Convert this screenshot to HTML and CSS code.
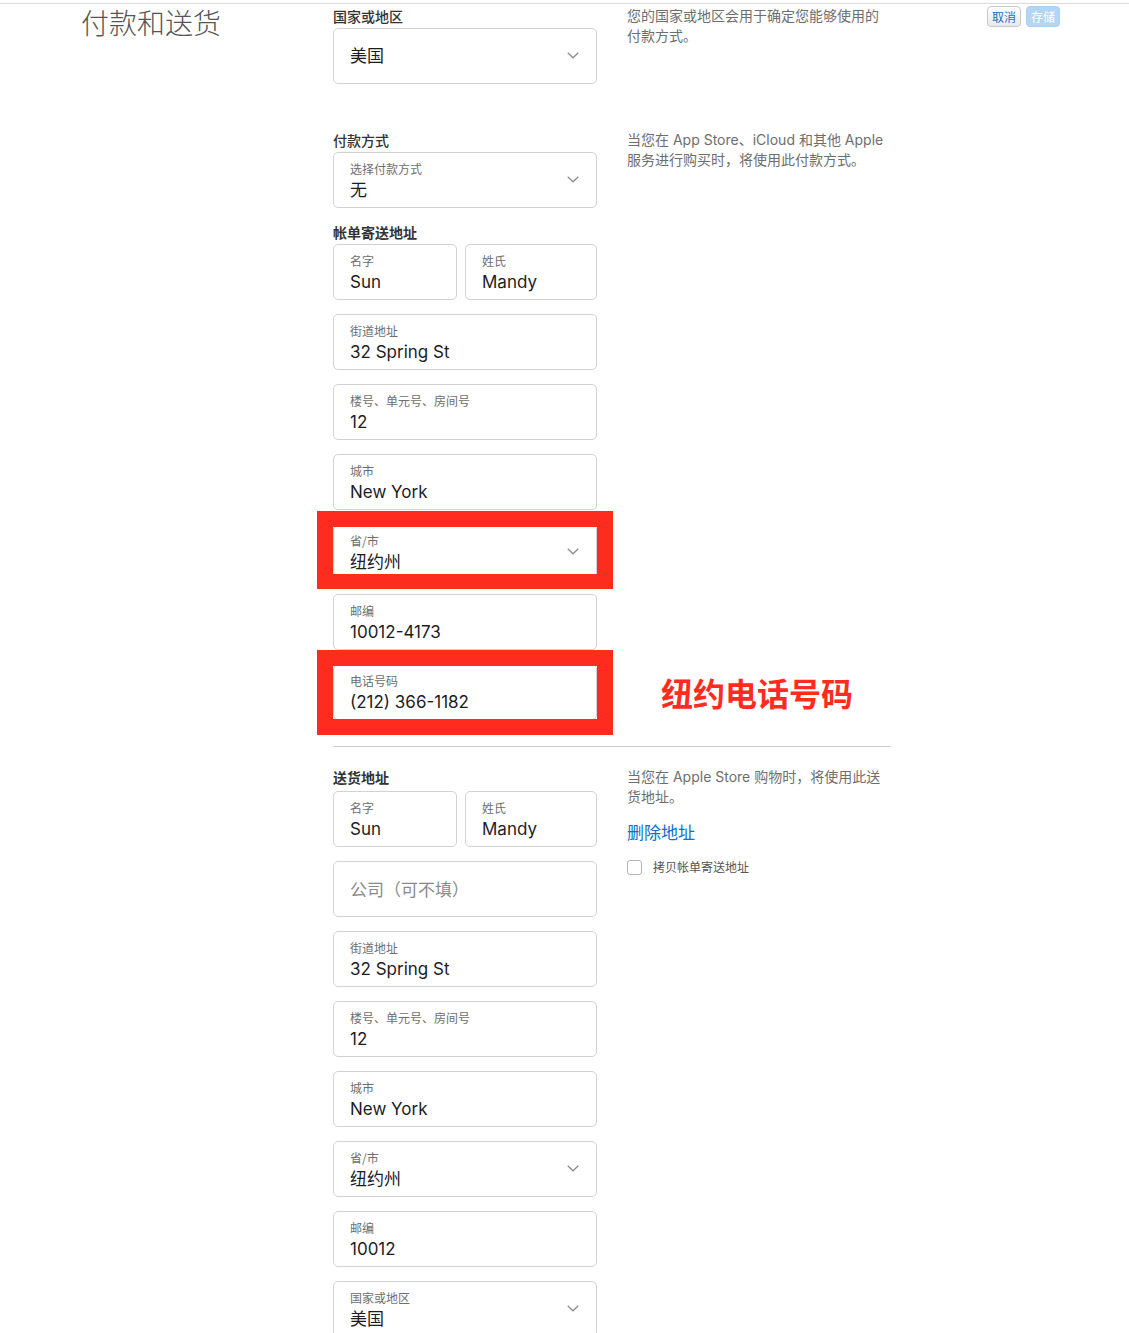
FILE: index.html
```html
<!DOCTYPE html>
<html lang="zh-CN">
<head>
<meta charset="utf-8">
<title>付款和送货</title>
<link rel="stylesheet" href="styles.css">
</head>
<body>
<div class="topline"></div>
<main class="page">
  <section class="row row-country">
    <h1 class="title">付款和送货</h1>
    <div class="form-col">
      <div class="group-label">国家或地区</div>
      <div class="field select single">
        <div class="value">美国</div>
        <svg class="chev" width="12" height="7" viewBox="0 0 12 7"><path d="M0.7 0.7L6 5.8L11.3 0.7" fill="none" stroke="#8a8a8a" stroke-width="1.2"/></svg>
      </div>
    </div>
    <div class="desc-col">
      <p class="desc">您的国家或地区会用于确定您能够使用的付款方式。</p>
    </div>
    <div class="actions">
      <button class="btn btn-cancel">取消</button>
      <button class="btn btn-save">存储</button>
    </div>
  </section>

  <section class="row row-payment">
    <div class="spacer"></div>
    <div class="form-col">
      <div class="group-label">付款方式</div>
      <div class="field select">
        <div class="label">选择付款方式</div>
        <div class="value">无</div>
        <svg class="chev" width="12" height="7" viewBox="0 0 12 7"><path d="M0.7 0.7L6 5.8L11.3 0.7" fill="none" stroke="#8a8a8a" stroke-width="1.2"/></svg>
      </div>

      <div class="group-label strong billing-label">帐单寄送地址</div>
      <div class="fields">
        <div class="name-row">
          <div class="field first"><div class="label">名字</div><div class="value">Sun</div></div>
          <div class="field last"><div class="label">姓氏</div><div class="value">Mandy</div></div>
        </div>
        <div class="field"><div class="label">街道地址</div><div class="value">32 Spring St</div></div>
        <div class="field"><div class="label">楼号、单元号、房间号</div><div class="value">12</div></div>
        <div class="field"><div class="label">城市</div><div class="value">New York</div></div>
        <div class="field select">
          <div class="label">省/市</div>
          <div class="value">纽约州</div>
          <svg class="chev" width="12" height="7" viewBox="0 0 12 7"><path d="M0.7 0.7L6 5.8L11.3 0.7" fill="none" stroke="#8a8a8a" stroke-width="1.2"/></svg>
          <div class="hl hl-state"></div>
        </div>
        <div class="field"><div class="label">邮编</div><div class="value">10012-4173</div></div>
        <div class="field">
          <div class="label">电话号码</div>
          <div class="value">(212) 366-1182</div>
          <div class="hl hl-phone"></div>
          <div class="note">纽约电话号码</div>
        </div>
      </div>
    </div>
    <div class="desc-col">
      <p class="desc">当您在 App Store、iCloud 和其他 Apple 服务进行购买时，将使用此付款方式。</p>
    </div>
  </section>

  <div class="sep-row"><div class="sep"></div></div>

  <section class="row row-shipping">
    <div class="spacer"></div>
    <div class="form-col">
      <div class="group-label strong ship-label">送货地址</div>
      <div class="fields">
        <div class="name-row">
          <div class="field first"><div class="label">名字</div><div class="value">Sun</div></div>
          <div class="field last"><div class="label">姓氏</div><div class="value">Mandy</div></div>
        </div>
        <div class="field single"><div class="placeholder">公司（可不填）</div></div>
        <div class="field"><div class="label">街道地址</div><div class="value">32 Spring St</div></div>
        <div class="field"><div class="label">楼号、单元号、房间号</div><div class="value">12</div></div>
        <div class="field"><div class="label">城市</div><div class="value">New York</div></div>
        <div class="field select">
          <div class="label">省/市</div>
          <div class="value">纽约州</div>
          <svg class="chev" width="12" height="7" viewBox="0 0 12 7"><path d="M0.7 0.7L6 5.8L11.3 0.7" fill="none" stroke="#8a8a8a" stroke-width="1.2"/></svg>
        </div>
        <div class="field"><div class="label">邮编</div><div class="value">10012</div></div>
        <div class="field select">
          <div class="label">国家或地区</div>
          <div class="value">美国</div>
          <svg class="chev" width="12" height="7" viewBox="0 0 12 7"><path d="M0.7 0.7L6 5.8L11.3 0.7" fill="none" stroke="#8a8a8a" stroke-width="1.2"/></svg>
        </div>
      </div>
    </div>
    <div class="desc-col">
      <p class="desc">当您在 Apple Store 购物时，将使用此送货地址。</p>
      <a class="link" href="#">删除地址</a>
      <label class="check"><span class="box"></span><span class="check-text">拷贝帐单寄送地址</span></label>
    </div>
  </section>
</main>
</body>
</html>
```

FILE: styles.css
```css
* { box-sizing: border-box; }

html, body {
  margin: 0;
  padding: 0;
  background: #fff;
}

body {
  font-family: Inter, "Noto Sans CJK SC", sans-serif;
  color: #1d1d1f;
  height: 1333px;
  overflow: hidden;
}

.topline {
  margin-top: 3px;
  height: 1px;
  background: #d9d9d9;
}

.page {
  display: flex;
  flex-direction: column;
}

.row {
  display: flex;
  align-items: flex-start;
}

.title {
  flex: none;
  width: 333px;
  margin: 0;
  padding-left: 81px;
  font-family: "Noto Sans CJK SC", sans-serif;
  font-size: 28px;
  line-height: 32px;
  font-weight: 300;
  color: #555;
}

.spacer {
  flex: none;
  width: 333px;
}

.form-col {
  flex: none;
  width: 264px;
  display: flex;
  flex-direction: column;
}

.desc-col {
  flex: none;
  width: 264px;
  margin-left: 30px;
  display: flex;
  flex-direction: column;
  align-items: flex-start;
}

.row-country { padding-top: 2px; }
.row-payment { margin-top: 46px; }
.row-shipping { margin-top: 20px; }

.group-label {
  font-family: "Noto Sans CJK SC", sans-serif;
  font-size: 14px;
  line-height: 20px;
  font-weight: 500;
  color: #333;
  margin-bottom: 2px;
}

.group-label.strong { font-weight: 700; }
.billing-label { margin-top: 14px; }
.ship-label { margin-bottom: 4px; }

.desc {
  margin: 0;
  font-size: 14px;
  line-height: 20px;
  color: #6e6e6e;
}

.actions {
  flex: 1;
  display: flex;
  justify-content: flex-end;
  gap: 5px;
  padding-right: 69px;
}

.btn {
  height: 21px;
  padding: 0 4px;
  border-radius: 4px;
  font-family: "Noto Sans CJK SC", sans-serif;
  font-size: 12px;
  line-height: 19px;
  cursor: pointer;
}

.btn-cancel {
  background: linear-gradient(#fefefe, #e9e9e9);
  border: 1px solid #c8c8c8;
  color: #1f6fc4;
}

.btn-save {
  background: #b3d6f4;
  border: 1px solid #a9d0f1;
  color: #fff;
}

.fields {
  display: flex;
  flex-direction: column;
  gap: 14px;
}

.name-row {
  display: flex;
  gap: 8px;
}

.name-row .first { width: 124px; }
.name-row .last { width: 132px; }

.field {
  position: relative;
  height: 56px;
  border: 1px solid #d2d2d2;
  border-radius: 5px;
  padding: 8px 16px 0;
  background: #fff;
}

.field.single {
  display: flex;
  align-items: center;
  padding-top: 0;
}

.label {
  font-family: "Noto Sans CJK SC", sans-serif;
  font-size: 12px;
  line-height: 16px;
  color: #6e6e6e;
}

.value {
  margin-top: 2px;
  font-size: 17px;
  line-height: 22px;
  color: #1d1d1f;
  white-space: nowrap;
}

.field.single .value { margin-top: 0; }

.placeholder {
  font-family: "Noto Sans CJK SC", sans-serif;
  font-size: 17px;
  line-height: 22px;
  color: #8a8a8a;
}

.chev {
  position: absolute;
  right: 17px;
  top: 50%;
  margin-top: -4px;
}

.hl {
  position: absolute;
  border: 16px solid #fe2c1f;
  pointer-events: none;
}

.hl-state {
  top: -14px;
  bottom: -10px;
  left: -17px;
  right: -17px;
  border-bottom-width: 15px;
}

.hl-phone {
  top: -15px;
  bottom: -16px;
  left: -17px;
  right: -17px;
}

.note {
  position: absolute;
  left: 327px;
  top: 50%;
  transform: translateY(-50%);
  font-family: "Noto Sans CJK SC", sans-serif;
  font-size: 32px;
  line-height: 40px;
  font-weight: 700;
  color: #fe2c1f;
  white-space: nowrap;
}

.sep-row {
  margin-top: 26px;
  padding-left: 333px;
}

.sep {
  width: 558px;
  height: 1px;
  background: #cfcfcf;
}

.link {
  margin-top: 13px;
  font-family: "Noto Sans CJK SC", sans-serif;
  font-size: 17px;
  line-height: 24px;
  color: #0a6fd0;
  text-decoration: none;
}

.check {
  margin-top: 15px;
  display: flex;
  align-items: center;
  gap: 11px;
}

.box {
  width: 15px;
  height: 15px;
  border: 1px solid #b5b5b5;
  border-radius: 3px;
  background: #fff;
}

.check-text {
  font-family: "Noto Sans CJK SC", sans-serif;
  font-size: 12px;
  line-height: 16px;
  color: #555;
}
```
